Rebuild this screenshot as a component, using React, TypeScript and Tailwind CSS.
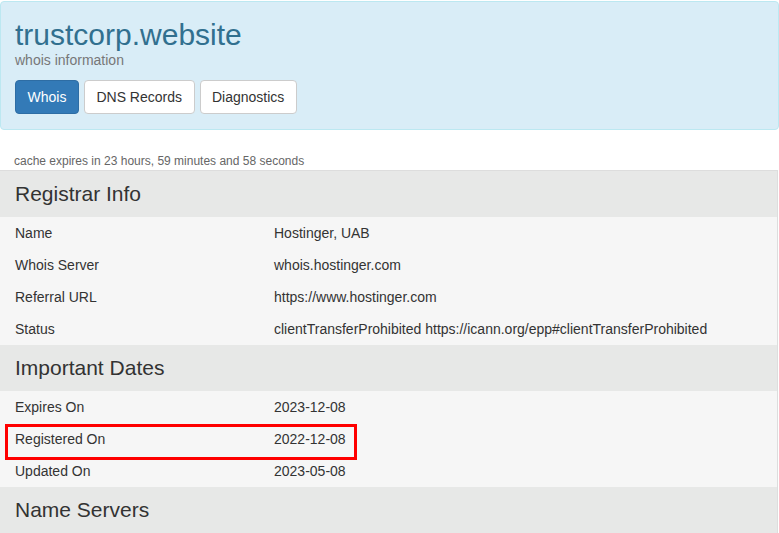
import * as React from 'react';

type Row = { label: string; value: string; marked?: boolean };
type Section = { title: string; rows: Row[] };

const sections: Section[] = [
  {
    title: 'Registrar Info',
    rows: [
      { label: 'Name', value: 'Hostinger, UAB' },
      { label: 'Whois Server', value: 'whois.hostinger.com' },
      { label: 'Referral URL', value: 'https://www.hostinger.com' },
      { label: 'Status', value: 'clientTransferProhibited https://icann.org/epp#clientTransferProhibited' },
    ],
  },
  {
    title: 'Important Dates',
    rows: [
      { label: 'Expires On', value: '2023-12-08' },
      { label: 'Registered On', value: '2022-12-08', marked: true },
      { label: 'Updated On', value: '2023-05-08' },
    ],
  },
  { title: 'Name Servers', rows: [] },
];

const tabs = ['Whois', 'DNS Records', 'Diagnostics'];

const App: React.FC = () => {
  const [active, setActive] = React.useState('Whois');

  return (
    <div className="min-h-[533px] bg-white text-[#333] font-['Liberation_Sans',Arial,sans-serif] pt-px overflow-hidden">
      {/* Header */}
      <div className="bg-[#d9edf7] border border-[#bce8f1] rounded-[4px] pl-[14px] pt-[16px] pb-[15px] h-[129px]">
        <h1 className="text-[30px] leading-[33px] text-[#31708f]">trustcorp.website</h1>
        <p className="text-[14px] leading-[19px] text-[#777]">whois information</p>
        <div className="flex gap-[5px] mt-[10px]">
          {tabs.map(t => (
            <button
              key={t}
              onClick={() => setActive(t)}
              className={`h-[34px] px-[11.5px] text-[14px] rounded-[4px] border ${
                active === t ? 'bg-[#337ab7] border-[#2e6da4] text-white' : 'bg-white border-[#ccc] text-[#333]'
              }`}
            >
              {t}
            </button>
          ))}
        </div>
      </div>

      <p className="text-[12px] leading-[17px] text-[#666] pl-[14px] mt-[23px]">
        cache expires in 23 hours, 59 minutes and 58 seconds
      </p>

      {/* Whois table */}
      <div className="border-t border-r border-[#ddd] mr-px">
        {sections.map(s => (
          <div key={s.title}>
            <div className="bg-[#e7e8e7] h-[46px] flex items-center px-[15px]">
              <h3 className="text-[21px] leading-[24px] text-[#333]">{s.title}</h3>
            </div>
            {s.rows.length > 0 && (
              <div className="bg-[#f6f6f6]">
                {s.rows.map(r => (
                  <div key={r.label} className="relative flex h-[32px] items-center px-[15px] text-[14px]">
                    <span className="w-[259px] shrink-0">{r.label}</span>
                    <span className="whitespace-nowrap">{r.value}</span>
                    {r.marked && (
                      <div className="absolute left-[5px] top-[1px] w-[352px] h-[36px] border-[3px] border-[#ff0000] pointer-events-none" />
                    )}
                  </div>
                ))}
              </div>
            )}
          </div>
        ))}
      </div>
    </div>
  );
};

export default App;
